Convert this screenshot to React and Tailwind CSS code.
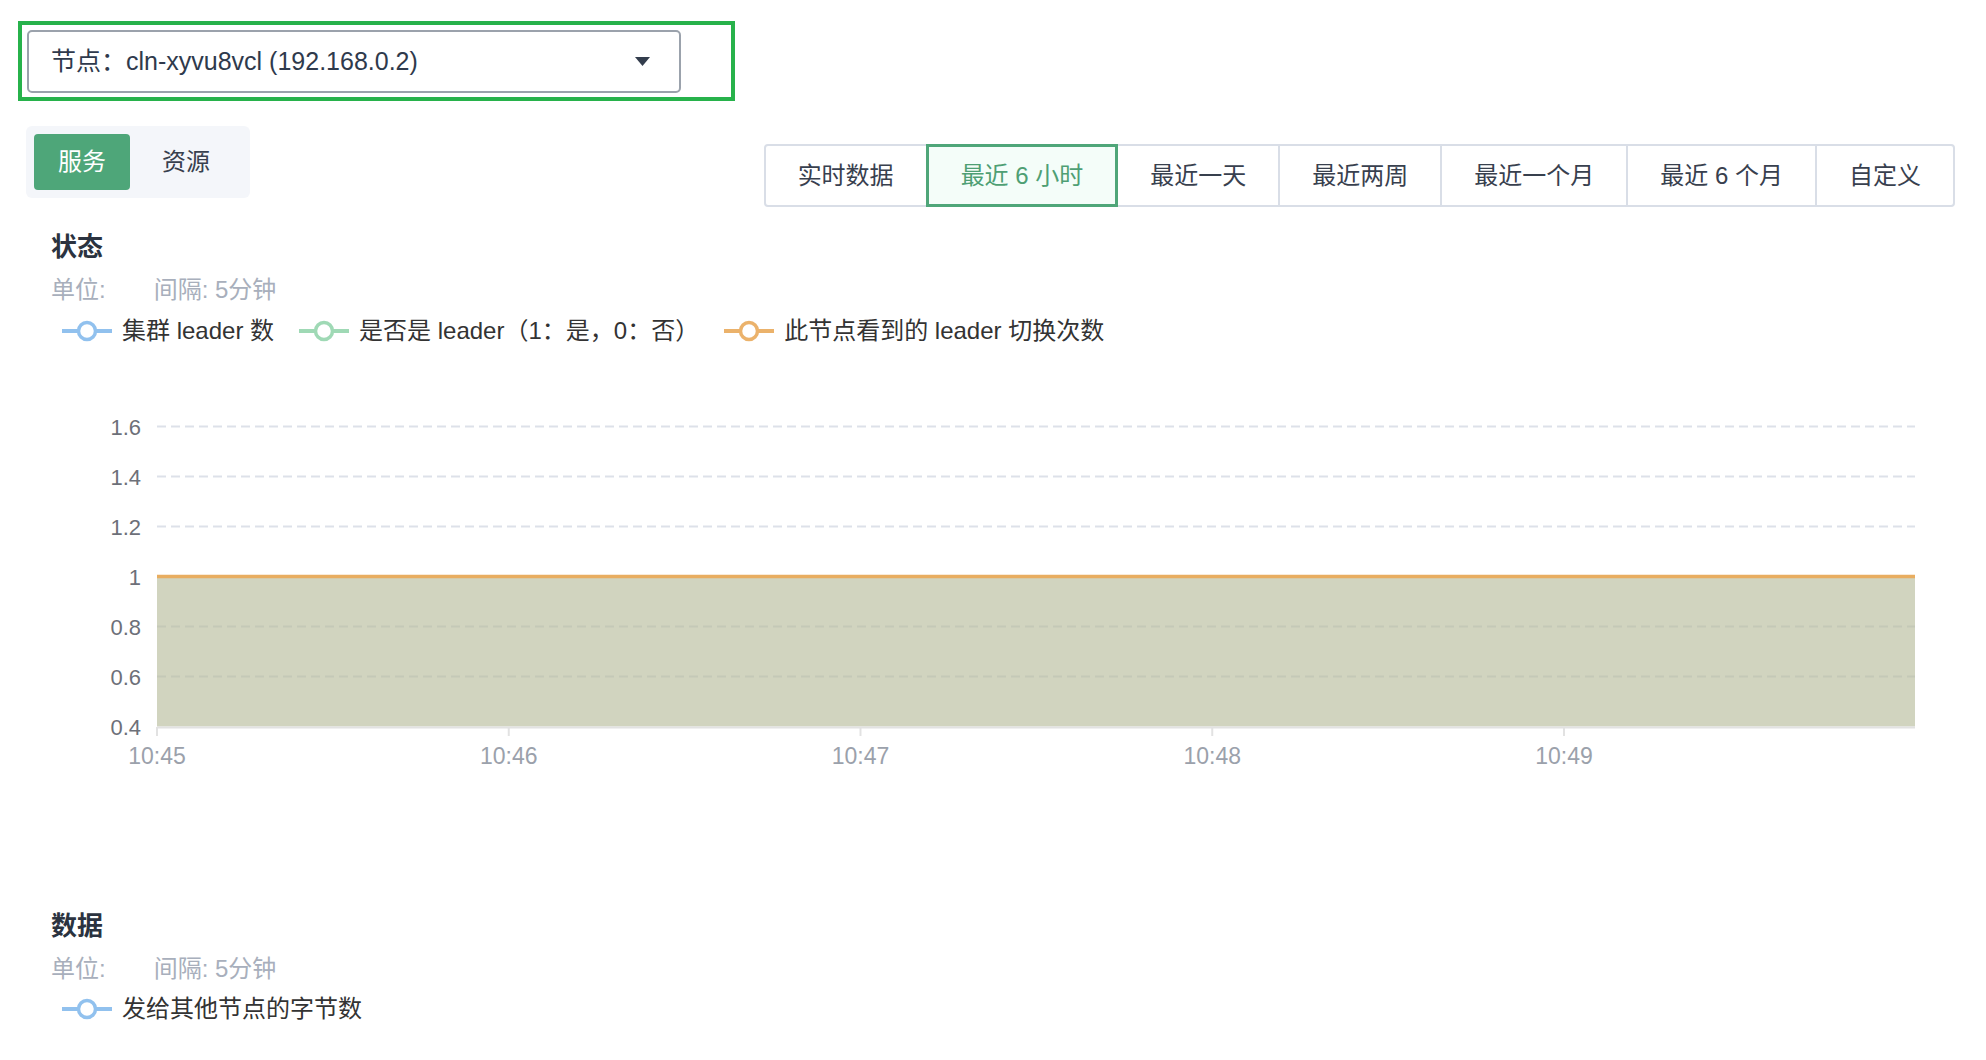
import React from "react";

const FONT = {
  fontFamily: '"Liberation Sans", "Noto Sans CJK SC", sans-serif',
};

const ranges = [
  { label: "实时数据" },
  { label: "最近 6 小时", active: true },
  { label: "最近一天" },
  { label: "最近两周" },
  { label: "最近一个月" },
  { label: "最近 6 个月" },
  { label: "自定义" },
];

const LegendIcon = ({ color }) => (
  <svg width="50" height="24" viewBox="0 0 50 24" className="shrink-0">
    <line x1="0" y1="12" x2="50" y2="12" stroke={color} strokeWidth="4" />
    <circle cx="25" cy="12" r="8.5" fill="#fff" stroke={color} strokeWidth="3.5" />
  </svg>
);

const Legend = ({ items }) => (
  <div className="flex items-center gap-[25px] pl-[11px] h-[32px]">
    {items.map((it) => (
      <div key={it.label} className="flex items-center gap-[10px]">
        <LegendIcon color={it.color} />
        <span className="text-[24px] leading-[32px] text-[#333333]">{it.label}</span>
      </div>
    ))}
  </div>
);

const SectionHead = ({ title }) => (
  <>
    <div className="text-[26px] leading-[36px] font-bold text-[#2b3340]">{title}</div>
    <div className="mt-[9px] flex h-[32px] items-center text-[24px] text-[#a8afbc]">
      <span>单位:</span>
      <span className="ml-[48px]">间隔: 5分钟</span>
    </div>
  </>
);

const StatusChart = () => {
  const left = 157;
  const right = 1915;
  const y = (v) => 326.5 - ((v - 0.4) / 0.2) * 50;
  const ticks = [1.6, 1.4, 1.2, 1, 0.8, 0.6, 0.4];
  const times = ["10:45", "10:46", "10:47", "10:48", "10:49"];
  const step = 351.75;

  return (
    <svg width="1986" height="380" viewBox="0 0 1986 380" className="block">
      {ticks.slice(0, 6).map((t) => (
        <line
          key={t}
          x1={left}
          x2={right}
          y1={y(t)}
          y2={y(t)}
          stroke="#dde1e9"
          strokeWidth="2"
          strokeDasharray="9 5"
        />
      ))}
      <rect
        x={left}
        y={y(1)}
        width={right - left}
        height={y(0.4) - y(1)}
        fill="rgb(181,186,153)"
        fillOpacity="0.625"
      />
      <line x1={left} x2={right} y1={y(1)} y2={y(1)} stroke="#e8ad60" strokeWidth="3.5" />
      <line x1={left} x2={right} y1={327.5} y2={327.5} stroke="#e2e2e2" strokeWidth="2" />
      {times.map((t, i) => (
        <line
          key={t}
          x1={left + step * i}
          x2={left + step * i}
          y1={327}
          y2={336}
          stroke="#e2e2e2"
          strokeWidth="2"
        />
      ))}
      {ticks.map((t) => (
        <text
          key={t}
          x="141"
          y={y(t) + 8}
          textAnchor="end"
          fontSize="22"
          fill="#6d7079"
          style={FONT}
        >
          {t}
        </text>
      ))}
      {times.map((t, i) => (
        <text
          key={t}
          x={left + step * i}
          y="364"
          textAnchor="middle"
          fontSize="23"
          fill="#9ba1ab"
          style={FONT}
        >
          {t}
        </text>
      ))}
    </svg>
  );
};

export default function App() {
  return (
    <div className="w-[1986px] min-h-[1060px] bg-white overflow-hidden" style={FONT}>
      {/* node select, highlighted */}
      <div className="ml-[18px] mt-[21px] w-[717px] h-[80px] border-4 border-[#27b24b] p-[5px]">
        <div className="flex h-[63px] w-[654px] items-center justify-between rounded-[5px] border-2 border-[#9ba2ac] pl-[22px] pr-[29px]">
          <span className="text-[25px] text-[#2f3a4c]">节点：cln-xyvu8vcl (192.168.0.2)</span>
          <svg width="15" height="9" viewBox="0 0 15 9">
            <path d="M0 0h15L7.5 9z" fill="#333d4d" />
          </svg>
        </div>
      </div>

      <div className="mt-[25px] flex items-start justify-between pl-[26px] pr-[31px]">
        <div className="flex rounded-[6px] bg-[#f4f6fa] p-[8px]">
          <button className="h-[56px] w-[96px] rounded-[4px] bg-[#4ea679] text-[24px] text-white">
            服务
          </button>
          <button className="h-[56px] w-[112px] text-[24px] text-[#38404e]">资源</button>
        </div>

        <div className="mt-[18px] flex h-[63px] rounded-[4px] border-2 border-[#d9dee7]">
          {ranges.map((r, i) =>
            r.active ? (
              <div
                key={r.label}
                className="-my-[2px] flex items-center border-[3px] border-[#4fa679] bg-[#f4fdf9] px-[32px] text-[24px] text-[#4e9f74]"
              >
                {r.label}
              </div>
            ) : (
              <div
                key={r.label}
                className={
                  "flex items-center px-[32px] text-[24px] text-[#38404e] " +
                  (i < ranges.length - 1 && !ranges[i + 1].active ? "border-r-2 border-[#d9dee7]" : "")
                }
              >
                {r.label}
              </div>
            )
          )}
        </div>
      </div>

      {/* 状态 */}
      <div className="mt-[22px] pl-[51px]">
        <SectionHead title="状态" />
      </div>
      <div className="mt-[9px] pl-[51px]">
        <Legend
          items={[
            { label: "集群 leader 数", color: "#91c1ee" },
            { label: "是否是 leader（1：是，0：否）", color: "#9fd9b5" },
            { label: "此节点看到的 leader 切换次数", color: "#ebb26b" },
          ]}
        />
      </div>
      <div className="mt-[53px]">
        <StatusChart />
      </div>

      {/* 数据 */}
      <div className="mt-[128px] pl-[51px]">
        <SectionHead title="数据" />
      </div>
      <div className="mt-[8px] pl-[51px]">
        <Legend items={[{ label: "发给其他节点的字节数", color: "#91c1ee" }]} />
      </div>
    </div>
  );
}
